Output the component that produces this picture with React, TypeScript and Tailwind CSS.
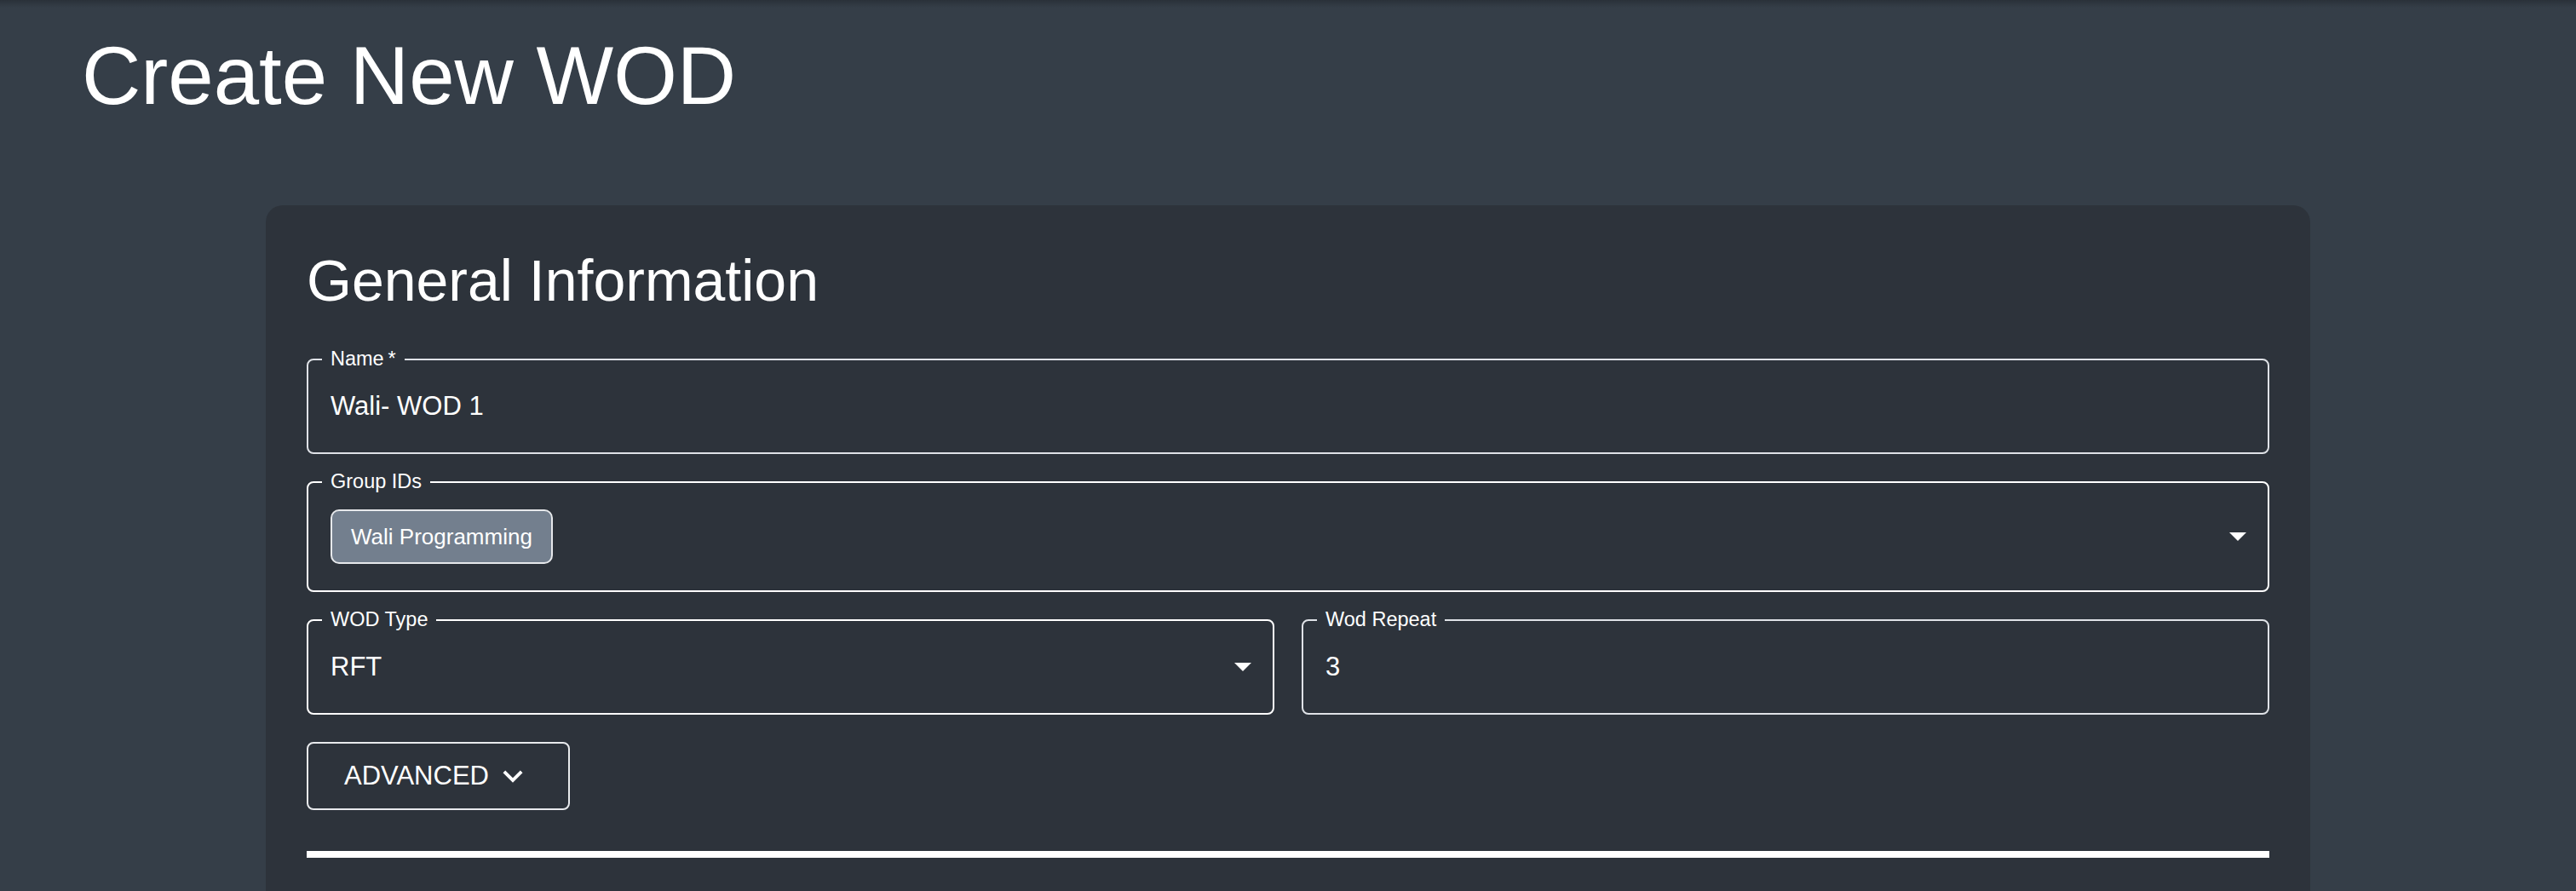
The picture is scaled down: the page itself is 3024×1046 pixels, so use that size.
import type { ReactNode } from "react";

interface FieldProps {
    label: string;
    frame: string;
    children: ReactNode;
}

function Field({ label, frame, children }: FieldProps) {
    return (
        <div className={`relative flex items-center rounded-[8px] border-2 pl-[26px] pr-[25px] ${frame}`}>
            <span className="absolute -top-[14px] left-[16px] bg-[#2d333b] px-[10px] text-[23.5px] leading-[24px] text-white">
                {label}
            </span>
            {children}
        </div>
    );
}

function DropArrow() {
    return (
        <svg width="20" height="10" viewBox="0 0 20 10" className="ml-auto shrink-0">
            <polygon points="0,0 20,0 10,10" fill="#ffffff" />
        </svg>
    );
}

export default function App() {
    return (
        <div className="h-[1046px] w-[3024px] overflow-hidden bg-[linear-gradient(to_bottom,#2a3139_0px,#353e48_9px,#353e48_100%)] font-['Liberation_Sans',Arial,Helvetica,sans-serif] text-white">
            <h1 className="pl-[96px] pt-[33px] text-[96px] font-normal leading-[112px]">Create New WOD</h1>

            <div className="mx-auto mt-[96px] w-[2400px] rounded-t-[20px] bg-[#2d333b] px-[48px] pb-[200px] pt-[46px]">
                <h2 className="mb-[50px] text-[68px] font-normal leading-[84px]">General Information</h2>

                <div className="flex flex-col gap-[32px]">
                    <Field label={"Name\u2009*"} frame="h-[112px] border-[#dfe2e7]">
                        <span className="text-[31px] leading-[36px]">Wali- WOD 1</span>
                    </Field>

                    <Field label="Group IDs" frame="h-[130px] border-white">
                        <span className="flex h-[64px] items-center rounded-[10px] border-2 border-[#e6e8eb] bg-[#737f8e] px-[22px] text-[26px] leading-[30px]">
                            Wali Programming
                        </span>
                        <DropArrow />
                    </Field>

                    <div className="grid grid-cols-2 gap-[32px]">
                        <Field label="WOD Type" frame="h-[112px] border-white">
                            <span className="text-[31px] leading-[36px]">RFT</span>
                            <DropArrow />
                        </Field>
                        <Field label="Wod Repeat" frame="h-[112px] border-[#dfe2e7]">
                            <span className="text-[31px] leading-[36px]">3</span>
                        </Field>
                    </div>
                </div>

                <button
                    type="button"
                    className="mt-[32px] flex h-[80px] items-center gap-[5px] rounded-[8px] border-2 border-[#e8eaed] pl-[42px] pr-[42px] text-[31px] leading-[36px] text-white"
                >
                    ADVANCED
                    <svg width="46" height="46" viewBox="0 0 24 24" fill="#ffffff">
                        <path d="M16.59 8.59 12 13.17 7.41 8.59 6 10l6 6 6-6z" />
                    </svg>
                </button>

                <div className="mt-[48px] h-[8px] bg-white" />
            </div>
        </div>
    );
}
